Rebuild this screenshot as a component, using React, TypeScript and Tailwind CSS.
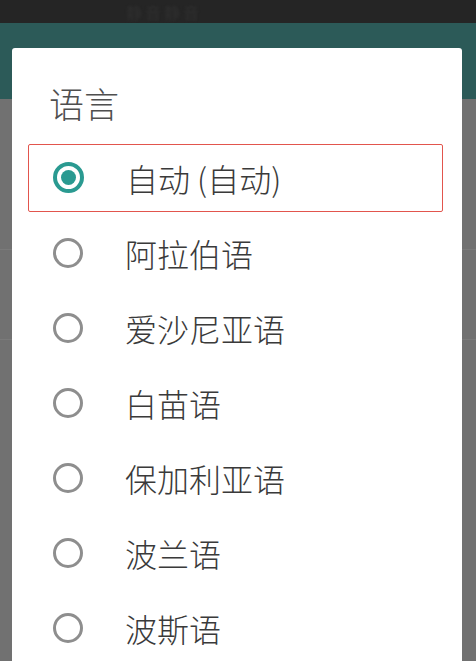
import React from "react";

const items = [
  { label: "自动 (自动)", selected: true },
  { label: "阿拉伯语" },
  { label: "爱沙尼亚语" },
  { label: "白苗语" },
  { label: "保加利亚语" },
  { label: "波兰语" },
  { label: "波斯语" },
];

function Radio({ selected }: { selected?: boolean }) {
  if (selected) {
    return (
      <div className="w-[31px] h-[31px] rounded-full border-[4px] border-[#2a9a91] flex items-center justify-center shrink-0">
        <div className="w-[15px] h-[15px] rounded-full bg-[#2a9a91]" />
      </div>
    );
  }
  return <div className="w-[30px] h-[30px] rounded-full border-[3.5px] border-[#8e8e8e] shrink-0" />;
}

export default function App() {
  return (
    <div
      className="relative w-[476px] h-[661px] overflow-hidden bg-[#717171]"
      style={{ fontFamily: '"Noto Sans CJK SC", "Noto Sans", sans-serif' }}
    >
      <div className="h-[23px] bg-[#252525] flex items-center pl-[126px]">
        <span className="text-[16px] leading-[18px] text-[#2f2f2f] blur-[1px] tracking-[3px]">静音静音</span>
      </div>
      <div className="h-[76px] bg-[#2c5a58]" />
      <div className="h-[151px] bg-[#717171] border-b border-[#7a7a7a]" />
      <div className="h-[90px] bg-[#717171] border-b border-[#7a7a7a]" />

      <div className="absolute left-[12px] top-[48px] w-[450px] h-[640px] bg-white rounded-[3px] pt-[30px]">
        <div className="h-[50px] flex items-center pl-[37px] text-[35px] font-light text-[#4f4f4f]">语言</div>
        <div className="mt-[12px]">
          {items.map((it) => (
            <div key={it.label} className="h-[75px] flex items-center pl-[16px] pr-[19px]">
              <div
                className={
                  "h-[68px] w-full flex items-center pl-[24px] rounded-[2px] border-[1.5px] " +
                  (it.selected ? "border-[#e2554d]" : "border-transparent")
                }
              >
                <Radio selected={it.selected} />
                <span className="ml-[42px] text-[32px] font-light text-[#3a3a3a] leading-none">{it.label}</span>
              </div>
            </div>
          ))}
        </div>
      </div>
    </div>
  );
}
